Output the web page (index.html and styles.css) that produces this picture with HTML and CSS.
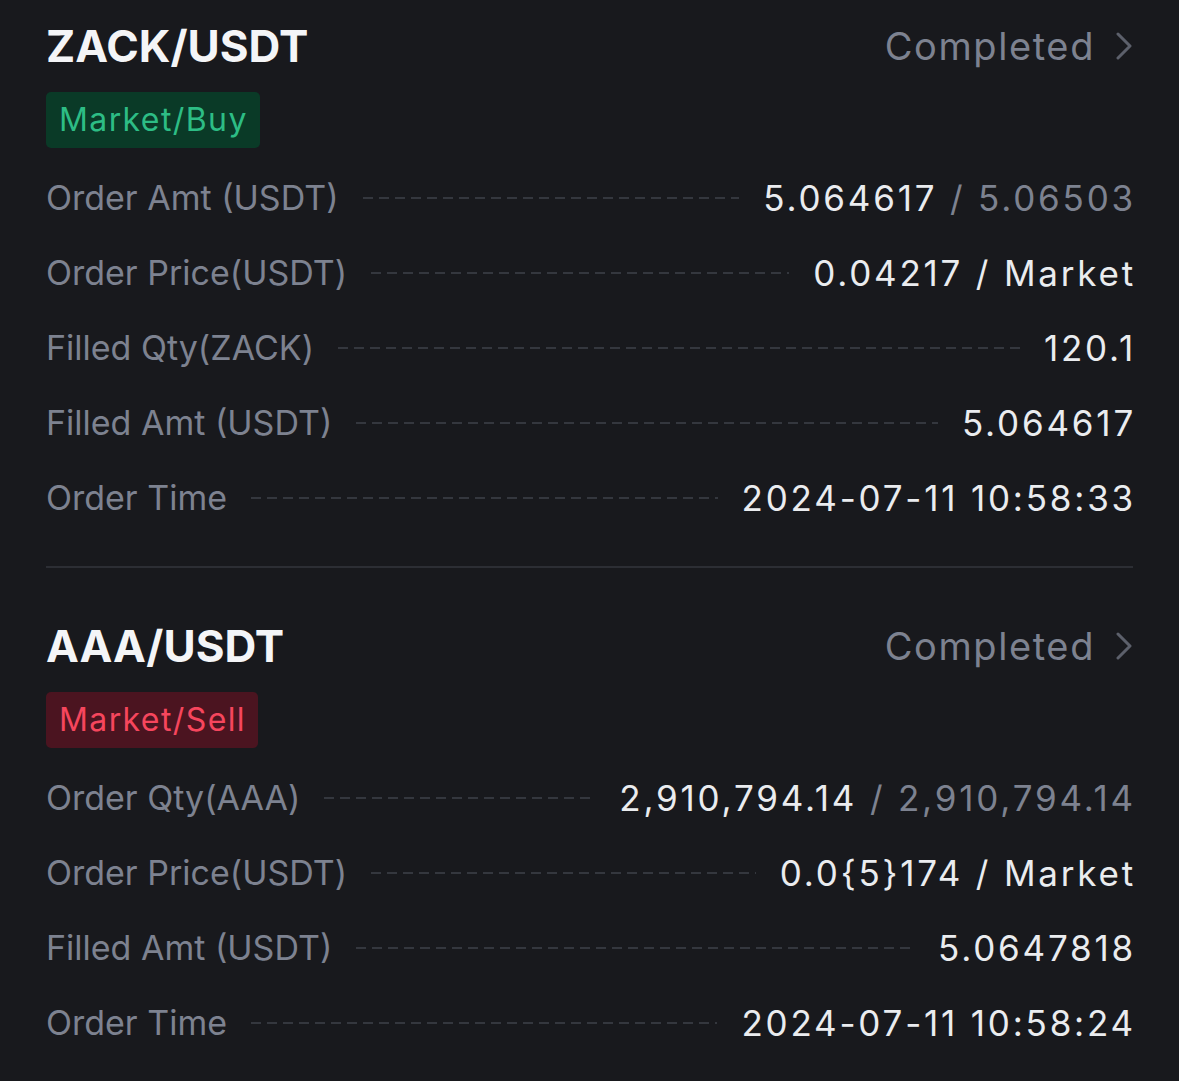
FILE: index.html
```html
<!DOCTYPE html>
<html lang="en">
<head>
    <meta charset="UTF-8">
    <meta name="viewport" content="width=device-width, initial-scale=1.0">
    <title>Order History</title>
    <link rel="stylesheet" href="styles.css">
</head>
<body>
    <div class="orders">
        <!-- ZACK order -->
        <div class="order">
            <div class="order-head">
                <h1 class="pair">ZACK/USDT</h1>
                <a class="status" href="#">Completed
                    <svg class="chevron" viewBox="0 0 18 28" width="18" height="28"><path d="M3 2 L15 14 L3 26" fill="none" stroke="#5c606b" stroke-width="3" stroke-linecap="round" stroke-linejoin="round"/></svg>
                </a>
            </div>
            <span class="tag tag-buy">Market/Buy</span>
            <div class="row">
                <span class="label">Order Amt (USDT)</span>
                <span class="dots"></span>
                <span class="value">5.064617 <span class="muted">/ 5.06503</span></span>
            </div>
            <div class="row">
                <span class="label">Order Price(USDT)</span>
                <span class="dots"></span>
                <span class="value">0.04217 / Market</span>
            </div>
            <div class="row">
                <span class="label">Filled Qty(ZACK)</span>
                <span class="dots"></span>
                <span class="value">120.1</span>
            </div>
            <div class="row">
                <span class="label">Filled Amt (USDT)</span>
                <span class="dots"></span>
                <span class="value">5.064617</span>
            </div>
            <div class="row">
                <span class="label">Order Time</span>
                <span class="dots"></span>
                <span class="value">2024-07-11 10:58:33</span>
            </div>
        </div>

        <div class="divider"></div>

        <!-- AAA order -->
        <div class="order">
            <div class="order-head">
                <h1 class="pair">AAA/USDT</h1>
                <a class="status" href="#">Completed
                    <svg class="chevron" viewBox="0 0 18 28" width="18" height="28"><path d="M3 2 L15 14 L3 26" fill="none" stroke="#5c606b" stroke-width="3" stroke-linecap="round" stroke-linejoin="round"/></svg>
                </a>
            </div>
            <span class="tag tag-sell">Market/Sell</span>
            <div class="row">
                <span class="label">Order Qty(AAA)</span>
                <span class="dots"></span>
                <span class="value">2,910,794.14 <span class="muted">/ 2,910,794.14</span></span>
            </div>
            <div class="row">
                <span class="label">Order Price(USDT)</span>
                <span class="dots"></span>
                <span class="value">0.0{5}174 / Market</span>
            </div>
            <div class="row">
                <span class="label">Filled Amt (USDT)</span>
                <span class="dots"></span>
                <span class="value">5.0647818</span>
            </div>
            <div class="row">
                <span class="label">Order Time</span>
                <span class="dots"></span>
                <span class="value">2024-07-11 10:58:24</span>
            </div>
        </div>
    </div>
</body>
</html>
```

FILE: styles.css
```css
body {
    margin: 0;
    background-color: #18191d;
    font-family: 'Inter', 'Noto Sans', sans-serif;
    color: #eaecef;
}

.orders {
    padding: 20px 46px 0 46px;
}

.order {
    display: flex;
    flex-direction: column;
    align-items: flex-start;
}

.order-head {
    display: flex;
    justify-content: space-between;
    align-items: center;
    width: 100%;
    height: 52px;
}

.pair {
    margin: 0;
    font-size: 44px;
    font-weight: 700;
    line-height: 52px;
    color: #f4f5f7;
}

.status {
    display: flex;
    align-items: center;
    gap: 20px;
    font-size: 38px;
    letter-spacing: 1.6px;
    color: #7d8290;
    text-decoration: none;
}

.tag {
    margin-top: 20px;
    margin-bottom: 12px;
    height: 56px;
    line-height: 56px;
    padding: 0 12px 0 13px;
    border-radius: 5px;
    font-size: 32px;
    letter-spacing: 1.4px;
}

.tag-buy {
    background-color: #0a3a27;
    color: #2dbd85;
}

.tag-sell {
    background-color: #4b1420;
    color: #f6465d;
}

.row {
    display: flex;
    align-items: center;
    width: 100%;
    height: 75px;
    font-size: 34px;
}

.label {
    color: #7d8290;
    white-space: nowrap;
}

.dots {
    flex: 1;
    height: 2px;
    margin: 0 24px;
    background: repeating-linear-gradient(to right, #34373e 0 10px, transparent 10px 16px);
}

.value {
    white-space: nowrap;
    color: #eaecef;
    font-size: 35px;
    letter-spacing: 2.8px;
    margin-right: -3px;
}

.muted {
    color: #7d8290;
}

.divider {
    height: 2px;
    margin: 31px 0 52px 0;
    background-color: #2c2e34;
}
```
